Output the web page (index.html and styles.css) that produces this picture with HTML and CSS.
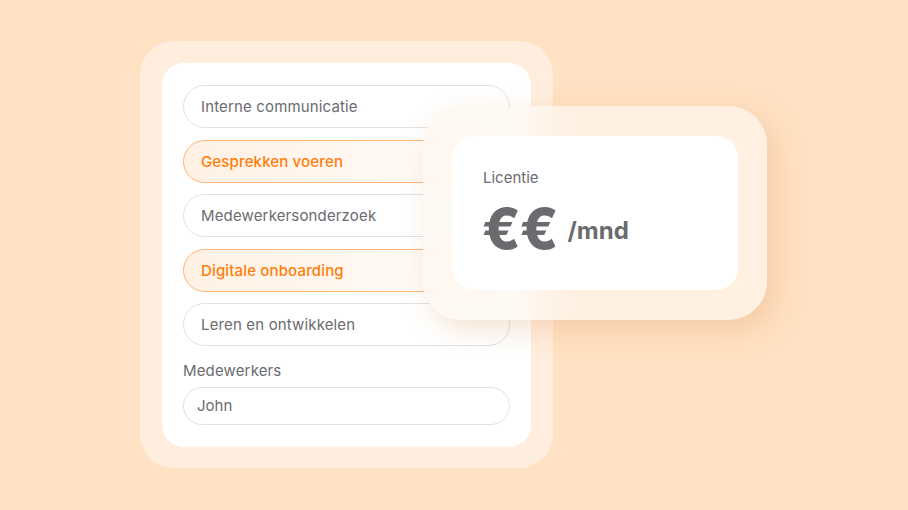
FILE: index.html
```html
<!DOCTYPE html>
<html lang="nl">
<head>
<meta charset="utf-8">
<link rel="stylesheet" href="styles.css">
</head>
<body>
<div class="stage">
  <div class="frame">
    <div class="card">
      <div class="pill">Interne communicatie</div>
      <div class="pill active">Gesprekken voeren</div>
      <div class="pill">Medewerkersonderzoek</div>
      <div class="pill active">Digitale onboarding</div>
      <div class="pill">Leren en ontwikkelen</div>
      <div class="label">Medewerkers</div>
      <div class="input">John</div>
    </div>
  </div>
  <div class="price-frame">
    <div class="price-card">
      <div class="price-label">Licentie</div>
      <div class="price"><span class="euro">€€</span><span class="per">/mnd</span></div>
    </div>
  </div>
</div>
</body>
</html>
```
FILE: styles.css
```css
html, body {
  margin: 0;
  padding: 0;
}
body {
  width: 908px;
  height: 510px;
  overflow: hidden;
  background: #ffe1c3;
  font-family: Inter, "Noto Sans", sans-serif;
}
.stage {
  position: relative;
  width: 908px;
  height: 510px;
  padding: 41px 0 0 140px;
  box-sizing: border-box;
}
.frame {
  width: 413px;
  height: 427px;
  box-sizing: border-box;
  padding: 22px;
  border-radius: 34px;
  background: rgba(255, 255, 255, 0.45);
}
.card {
  height: 384px;
  box-sizing: border-box;
  padding: 22px 21px 0 21px;
  background: #fff;
  border-radius: 22px;
  display: flex;
  flex-direction: column;
}
.pill {
  height: 43px;
  box-sizing: border-box;
  border: 1px solid #e1e1e5;
  border-radius: 22px;
  padding-left: 17px;
  display: flex;
  align-items: center;
  font-size: 15px;
  color: #6b6b70;
  margin-bottom: 11.5px;
  letter-spacing: 0.15px;
}
.pill.active {
  border-color: #ffb574;
  color: #ff7d0a;
  font-weight: 500;
  background: linear-gradient(90deg, #fff1e4 0%, #fff8f2 60%, #ffffff 100%);
}
.label {
  margin-top: 3px;
  font-size: 15px;
  line-height: 20px;
  color: #6b6b70;
  height: 20px;
  letter-spacing: 0.15px;
}
.input {
  margin-top: 6px;
  height: 38px;
  box-sizing: border-box;
  border: 1px solid #e1e1e5;
  border-radius: 20px;
  padding-left: 13px;
  display: flex;
  align-items: center;
  font-size: 15px;
  color: #6b6b70;
}
.price-frame {
  position: absolute;
  left: 423px;
  top: 106px;
  width: 344px;
  height: 214px;
  box-sizing: border-box;
  padding: 30px 29px;
  border-radius: 38px;
  background: rgba(255, 247, 240, 0.7);
  backdrop-filter: blur(10px);
  box-shadow: 8px 10px 28px rgba(220, 150, 90, 0.28);
}
.price-card {
  height: 154px;
  box-sizing: border-box;
  background: #fff;
  border-radius: 22px;
  padding: 32px 0 0 31px;
}
.price-label {
  font-size: 15px;
  line-height: 20px;
  color: #6b6b70;
}
.price {
  display: flex;
  align-items: center;
  margin-top: 11px;
  color: #6b6a6e;
  height: 56px;
}
.euro {
  font-size: 56px;
  font-weight: 800;
  line-height: 56px;
  letter-spacing: -1px;
  margin-left: -1px;
  position: relative;
  top: 2px;
}
.per {
  font-size: 24px;
  font-weight: 700;
  margin-left: 10px;
  position: relative;
  top: 3px;
}
```
